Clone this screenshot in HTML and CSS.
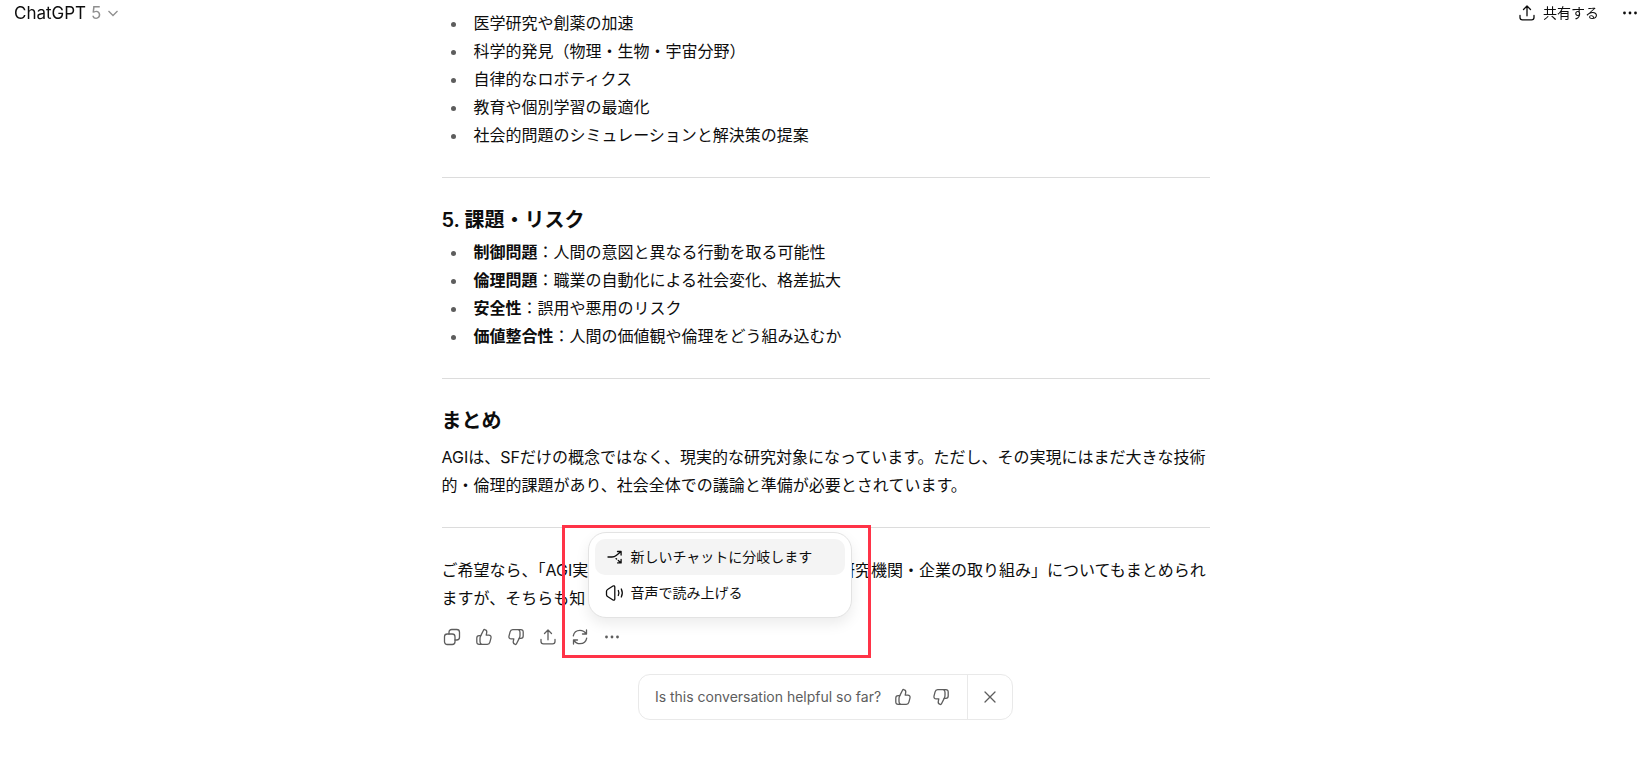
FILE: index.html
```
<!DOCTYPE html>
<html lang="ja">
<head>
  <meta charset="UTF-8">
  <meta name="viewport" content="width=device-width, initial-scale=1">
  <title>ChatGPT</title>
  <link rel="stylesheet" href="styles.css">
</head>
<body>
  <!-- shared icons -->
  <svg class="sprite" aria-hidden="true">
    <symbol id="i-thumb" viewBox="0 0 20 20">
      <path d="M6.8 8.6 9.5 3.2c.3-.6.7-.8 1.3-.6 1.5.4 2.2 1.7 1.9 3.1l-.5 2.4h2.6c1.6 0 2.6 1.3 2.2 2.8l-1.1 4.3c-.3 1.3-1.3 2.1-2.6 2.1H5.1c-1.4 0-2.3-.9-2.3-2.3v-4.1c0-1.4.9-2.3 2.3-2.3z"/>
      <path d="M6.8 8.6c-.7 1-.8 1.900-.8 3.100v2.900c0 1.200.4 2.200 1.400 2.700"/>
    </symbol>
    <symbol id="i-share" viewBox="0 0 20 20">
      <path d="M10 12.800V3.300M6.500 6.500 10 3l3.500 3.500M3 12.500v2c0 1.500.9 2.400 2.400 2.400h9.200c1.500 0 2.400-.9 2.400-2.400v-2"/>
    </symbol>
    <symbol id="i-dots" viewBox="0 0 20 20">
      <g fill="currentColor" stroke="none"><circle cx="4.500" cy="10" r="1.400"/><circle cx="10" cy="10" r="1.400"/><circle cx="15.500" cy="10" r="1.400"/></g>
    </symbol>
  </svg>

  <header class="topbar">
    <button class="model" type="button">
      <span>ChatGPT <span class="version">5</span></span>
      <svg class="chevron" viewBox="0 0 12 12"><path d="m1.500 4 4.500 4.500L10.500 4"/></svg>
    </button>
    <div class="topbar-right">
      <button class="share" type="button"><svg class="icon"><use href="#i-share"/></svg>共有する</button>
      <button class="more" type="button" aria-label="その他"><svg class="icon"><use href="#i-dots"/></svg></button>
    </div>
  </header>

  <main class="thread">
    <article class="message">
      <ul>
        <li>医学研究や創薬の加速</li>
        <li>科学的発見（物理・生物・宇宙分野）</li>
        <li>自律的なロボティクス</li>
        <li>教育や個別学習の最適化</li>
        <li>社会的問題のシミュレーションと解決策の提案</li>
      </ul>
      <hr>
      <h3>5. 課題・リスク</h3>
      <ul>
        <li><strong>制御問題</strong>：人間の意図と異なる行動を取る可能性</li>
        <li><strong>倫理問題</strong>：職業の自動化による社会変化、格差拡大</li>
        <li><strong>安全性</strong>：誤用や悪用のリスク</li>
        <li><strong>価値整合性</strong>：人間の価値観や倫理をどう組み込むか</li>
      </ul>
      <hr>
      <h3>まとめ</h3>
      <p class="summary">AGIは、SFだけの概念ではなく、現実的な研究対象になっています。ただし、その実現にはまだ大きな技術的・倫理的課題があり、社会全体での議論と準備が必要とされています。</p>
      <hr>
      <p>ご希望なら、「AGI実現に向けた技術動向」や「主なAGI研究機関・企業の取り組み」についてもまとめられますが、そちらも知りたいですか？</p>
    </article>

    <div class="actions">
      <button type="button" aria-label="コピー">
        <svg class="icon" viewBox="0 0 20 20"><rect x="2.500" y="7" width="10.500" height="10.500" rx="2.800"/><path d="M7 7V5.300c0-1.700 1.100-2.800 2.800-2.800h4.900c1.700 0 2.800 1.100 2.800 2.800v4.900c0 1.700-1.100 2.800-2.800 2.800H13"/></svg>
      </button>
      <button type="button" aria-label="良い回答"><svg class="icon"><use href="#i-thumb"/></svg></button>
      <button type="button" aria-label="良くない回答"><svg class="icon flip"><use href="#i-thumb"/></svg></button>
      <button type="button" aria-label="共有"><svg class="icon"><use href="#i-share"/></svg></button>
      <button type="button" aria-label="再生成">
        <svg class="icon" viewBox="0 0 20 20"><path d="M3.300 8.800C3.900 5.500 6.600 3.300 10 3.300c2.600 0 4.700 1.200 6 3.400M16.500 3v4h-4M16.700 11.200c-.6 3.300-3.300 5.500-6.700 5.500-2.600 0-4.700-1.200-6-3.400M3.500 17v-4h4"/></svg>
      </button>
      <div class="more-wrap">
        <button type="button" aria-label="その他の操作" aria-expanded="true"><svg class="icon"><use href="#i-dots"/></svg></button>
        <div class="menu" role="menu">
          <button class="active" type="button" role="menuitem">
            <svg class="icon" viewBox="0 0 20 20"><path d="M3 10h4c1.800 0 3-.5 4.200-1.500l4.600-3.800M12.500 4.500h3.600v3.600M11 11.600l.6.500M13.300 13.500l2.500 2.200M12.600 15.900h3.500v-3.500"/></svg>
            新しいチャットに分岐します
          </button>
          <button type="button" role="menuitem">
            <svg class="icon" viewBox="0 0 20 20"><path d="M1.500 8.300c0-1 .5-1.600 1.400-2.100L8 3c.8-.5 1.800 0 1.800.9v12.200c0 .9-1 1.400-1.800.9l-5.100-3.200c-.9-.5-1.400-1.100-1.400-2.100zM13.300 7.500c.8 1.600.8 3.400 0 5M16.300 6c1.300 2.600 1.300 5.400 0 8"/></svg>
            音声で読み上げる
          </button>
        </div>
      </div>
      <div class="highlight"></div>
    </div>

    <section class="feedback">
      <div class="feedback-main">
        <span>Is this conversation helpful so far?</span>
        <button type="button" aria-label="Yes"><svg class="icon"><use href="#i-thumb"/></svg></button>
        <button type="button" aria-label="No"><svg class="icon flip"><use href="#i-thumb"/></svg></button>
      </div>
      <button class="close" type="button" aria-label="Close">
        <svg class="icon" viewBox="0 0 20 20"><path d="m5 5 10 10M15 5 5 15"/></svg>
      </button>
    </section>
  </main>
</body>
</html>
```
FILE: styles.css
```
* { box-sizing: border-box; }
body {
  margin: 0;
  background: #fff;
  color: #0d0d0d;
  font-family: Inter, "Noto Sans CJK JP", sans-serif;
  font-size: 16px;
  line-height: 28px;
}
button {
  display: flex;
  align-items: center;
  justify-content: center;
  margin: 0;
  padding: 0;
  border: 0;
  background: none;
  color: inherit;
  font: inherit;
  cursor: pointer;
}
.sprite { position: absolute; width: 0; height: 0; }
.icon {
  flex: none;
  width: 20px;
  height: 20px;
  fill: none;
  stroke: currentColor;
  stroke-width: 1.3;
  stroke-linecap: round;
  stroke-linejoin: round;
}
.flip { transform: rotate(180deg); }

/* top bar, floats over the scrolled thread */
.topbar {
  position: fixed;
  top: 0;
  left: 0;
  right: 0;
  display: flex;
  justify-content: space-between;
  align-items: center;
  height: 26px;
  padding: 0 11px 0 14px;
}
.model { gap: 6px; font-size: 17px; }
.version { color: #8f8f8f; }
.chevron {
  width: 12px;
  height: 12px;
  fill: none;
  stroke: #8f8f8f;
  stroke-width: 1.3;
}
.topbar-right { display: flex; align-items: center; gap: 21px; }
.share { gap: 6px; font-size: 14px; }

/* conversation */
.thread {
  max-width: 768px;
  margin: 0 auto;
  padding-top: 9px;
}
.message ul {
  margin: 0;
  padding-left: 26px;
}
.message li { padding-left: 6px; }
.message li::marker { color: #5d5d5d; }
.message hr {
  height: 1px;
  margin: 28px 0;
  border: 0;
  background: #dcdcdc;
}
.message h3 {
  margin: 0 0 4px;
  font-size: 20px;
  font-weight: 600;
  line-height: 28px;
}
.message strong { font-weight: 600; }
.message p { margin: 0; }
.message .summary { margin-top: 8px; }

.actions {
  position: relative;
  display: flex;
  margin: 9px 0 0 -6px;
  color: #5d5d5d;
}
.actions > button, .more-wrap > button { width: 32px; height: 32px; }
.more-wrap { position: relative; }
.menu {
  position: absolute;
  left: -8px;
  bottom: 35px;
  width: 264px;
  padding: 6px;
  border: 1px solid #e3e3e3;
  border-radius: 18px;
  background: #fff;
  color: #0d0d0d;
  box-shadow: 0 6px 14px rgba(0, 0, 0, 0.08);
}
.menu button {
  justify-content: flex-start;
  gap: 6px;
  width: 100%;
  height: 36px;
  padding: 0 10px;
  border-radius: 10px;
  font-size: 14px;
}
.menu .active { background: #f4f4f4; }
.highlight {
  position: absolute;
  left: 126px;
  top: -96px;
  width: 309px;
  height: 133px;
  border: 3px solid #ff3347;
  pointer-events: none;
}

.feedback {
  display: flex;
  width: fit-content;
  margin: 21px auto 0;
  border: 1px solid #e9e9e9;
  border-radius: 12px;
  color: #5d5d5d;
  font-size: 14px;
}
.feedback-main {
  display: flex;
  align-items: center;
  gap: 6px;
  height: 44px;
  padding: 0 10px 0 16px;
}
.feedback-main button { width: 32px; height: 32px; }
.close { width: 45px; border-left: 1px solid #e9e9e9; }
```
